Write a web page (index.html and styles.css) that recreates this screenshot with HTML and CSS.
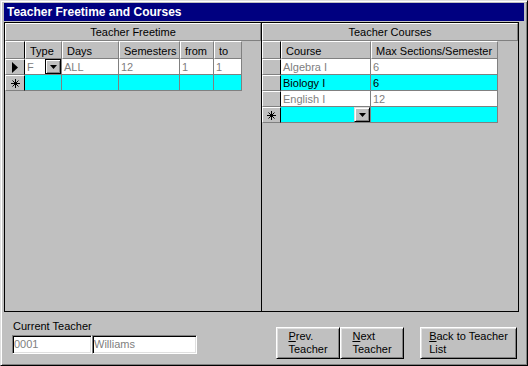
FILE: index.html
```html
<!DOCTYPE html>
<html lang="en">
<head>
    <meta charset="UTF-8">
    <title>Teacher Freetime and Courses</title>
    <link rel="stylesheet" href="styles.css">
</head>
<body>
    <div class="window">
        <div class="titlebar">Teacher Freetime and Courses</div>

        <div class="subforms">
            <!-- Freetime subform -->
            <section class="subform freetime">
                <div class="subform-head">Teacher Freetime</div>
                <div class="sheet">
                    <div class="row">
                        <div class="sel"></div>
                        <div class="col-head">Type</div>
                        <div class="col-head">Days</div>
                        <div class="col-head">Semesters</div>
                        <div class="col-head">from</div>
                        <div class="col-head">to</div>
                    </div>
                    <div class="row">
                        <div class="sel">
                            <svg width="6" height="11" viewBox="0 0 6 11"><polygon points="0,0 6,5.5 0,11" fill="#000"/></svg>
                        </div>
                        <div class="cell combo">
                            <span>F</span>
                            <span class="drop focused"><svg width="7" height="4" viewBox="0 0 7 4"><polygon points="0,0 7,0 3.5,4" fill="#000"/></svg></span>
                        </div>
                        <div class="cell">ALL</div>
                        <div class="cell">12</div>
                        <div class="cell">1</div>
                        <div class="cell">1</div>
                    </div>
                    <div class="row new">
                        <div class="sel">
                            <svg class="star" width="9" height="9" viewBox="0 0 9 9"><path d="M4.5 0V9M0 4.5H9M1.5 1.5L7.5 7.5M7.5 1.5L1.5 7.5" stroke="#000" stroke-width="1"/></svg>
                        </div>
                        <div class="cell"></div>
                        <div class="cell"></div>
                        <div class="cell"></div>
                        <div class="cell"></div>
                        <div class="cell"></div>
                    </div>
                </div>
            </section>

            <!-- Courses subform -->
            <section class="subform courses">
                <div class="subform-head">Teacher Courses</div>
                <div class="sheet">
                    <div class="row">
                        <div class="sel"></div>
                        <div class="col-head">Course</div>
                        <div class="col-head">Max Sections/Semester</div>
                    </div>
                    <div class="row">
                        <div class="sel"></div>
                        <div class="cell">Algebra I</div>
                        <div class="cell">6</div>
                    </div>
                    <div class="row current">
                        <div class="sel"></div>
                        <div class="cell">Biology I</div>
                        <div class="cell">6</div>
                    </div>
                    <div class="row">
                        <div class="sel"></div>
                        <div class="cell">English I</div>
                        <div class="cell">12</div>
                    </div>
                    <div class="row new">
                        <div class="sel">
                            <svg class="star" width="9" height="9" viewBox="0 0 9 9"><path d="M4.5 0V9M0 4.5H9M1.5 1.5L7.5 7.5M7.5 1.5L1.5 7.5" stroke="#000" stroke-width="1"/></svg>
                        </div>
                        <div class="cell combo">
                            <span></span>
                            <span class="drop"><svg width="7" height="4" viewBox="0 0 7 4"><polygon points="0,0 7,0 3.5,4" fill="#000"/></svg></span>
                        </div>
                        <div class="cell"></div>
                    </div>
                </div>
            </section>
        </div>

        <div class="footer">
            <div class="current-teacher">
                <div class="label">Current Teacher</div>
                <div class="fields">
                    <span class="field teacher-id">0001</span>
                    <span class="field teacher-name">Williams</span>
                </div>
            </div>
            <div class="nav">
                <button class="btn"><span><u>P</u>rev.<br>Teacher</span></button>
                <button class="btn"><span><u>N</u>ext<br>Teacher</span></button>
                <button class="btn back"><span><u>B</u>ack to Teacher<br>List</span></button>
            </div>
        </div>
    </div>
</body>
</html>
```

FILE: styles.css
```css
/* Access-style form window */
body {
    margin: 0;
    font-family: "Liberation Sans", Arial, sans-serif;
    font-size: 11px;
    color: #000;
    background: #c0c0c0;
}

.window {
    width: 528px;
    height: 366px;
    box-sizing: border-box;
    padding: 2px 3px 0 3px;
    background: #c0c0c0;
    border: 1px solid;
    border-color: #dfdfdf #000 #000 #dfdfdf;
    box-shadow: inset 1px 1px #fff, inset -1px -1px #808080;
}

.titlebar {
    height: 18px;
    line-height: 18px;
    padding-left: 3px;
    margin-bottom: 1px;
    background: #000080;
    color: #fff;
    font-weight: bold;
    font-size: 12px;
}

.subforms {
    display: flex;
    height: 290px;
}

.subform {
    box-sizing: border-box;
    height: 290px;
    border: 1px solid #000;
    background: #c0c0c0;
}

.freetime {
    width: 258px;
}

.courses {
    width: 257px;
    border-left: none;
}

.subform-head {
    box-sizing: border-box;
    height: 18px;
    padding-top: 1px;
    line-height: 15px;
    text-align: center;
    border: 1px solid;
    border-color: #fff #808080 #808080 #fff;
}

/* datasheet grid */
.sheet {
    display: grid;
    grid-template-rows: 18px;
    grid-auto-rows: 16px;
}

.freetime .sheet {
    grid-template-columns: 20px 37px 57px 61px 34px 28px;
}

.courses .sheet {
    grid-template-columns: 19px 90px 127px;
}

.row {
    display: contents;
}

.sel {
    box-sizing: border-box;
    display: flex;
    align-items: center;
    justify-content: center;
    border: 1px solid;
    border-color: #fff #000 #808080 #fff;
}

.col-head {
    box-sizing: border-box;
    padding: 2px 0 0 4px;
    line-height: 14px;
    white-space: nowrap;
    overflow: hidden;
    border: 1px solid;
    border-color: #fff #808080 #808080 #fff;
}

.cell {
    box-sizing: border-box;
    padding: 1px 0 0 2px;
    line-height: 14px;
    white-space: nowrap;
    overflow: hidden;
    background: #fff;
    color: #808080;
    border-right: 1px solid #808080;
    border-bottom: 1px solid #808080;
}

.row.new .cell {
    background: #00ffff;
}

.row.current .cell {
    background: #00ffff;
    color: #000;
}

.combo {
    display: flex;
    justify-content: space-between;
    padding-top: 0;
    padding-right: 0;
}

.combo span:first-child {
    padding-top: 1px;
}

.drop {
    box-sizing: border-box;
    width: 16px;
    height: 15px;
    display: flex;
    align-items: center;
    justify-content: center;
    background: #c0c0c0;
    border: 1px solid;
    border-color: #dfdfdf #000 #000 #dfdfdf;
    box-shadow: inset 1px 1px #fff, inset -1px -1px #808080;
}

.drop.focused {
    border-color: #000;
}

/* bottom area */
.footer {
    display: flex;
    padding-top: 8px;
}

.current-teacher {
    margin-left: 8px;
}

.label {
    line-height: 13px;
    padding-left: 1px;
}

.fields {
    display: flex;
    margin-top: 2px;
}

.field {
    box-sizing: border-box;
    height: 19px;
    padding-left: 1px;
    line-height: 15px;
    background: #fff;
    color: #808080;
    border: 1px solid;
    border-color: #808080 #fff #fff #808080;
    box-shadow: inset 1px 1px #000, inset -1px -1px #dfdfdf;
}

.field span, .field {
    padding-top: 1px;
}

.teacher-id {
    width: 80px;
}

.teacher-name {
    width: 105px;
}

.nav {
    display: flex;
    margin-left: auto;
    margin-right: 7px;
    margin-top: 7px;
}

.btn {
    box-sizing: border-box;
    width: 64px;
    height: 32px;
    padding: 0;
    display: flex;
    align-items: center;
    justify-content: center;
    text-align: left;
    font-family: "Liberation Sans", Arial, sans-serif;
    font-size: 11px;
    line-height: 13px;
    color: #000;
    background: #c0c0c0;
    border: 1px solid;
    border-color: #fff #000 #000 #fff;
    box-shadow: inset 1px 1px #dfdfdf, inset -1px -1px #808080;
}

.btn.back {
    width: 97px;
    margin-left: 16px;
}
```
